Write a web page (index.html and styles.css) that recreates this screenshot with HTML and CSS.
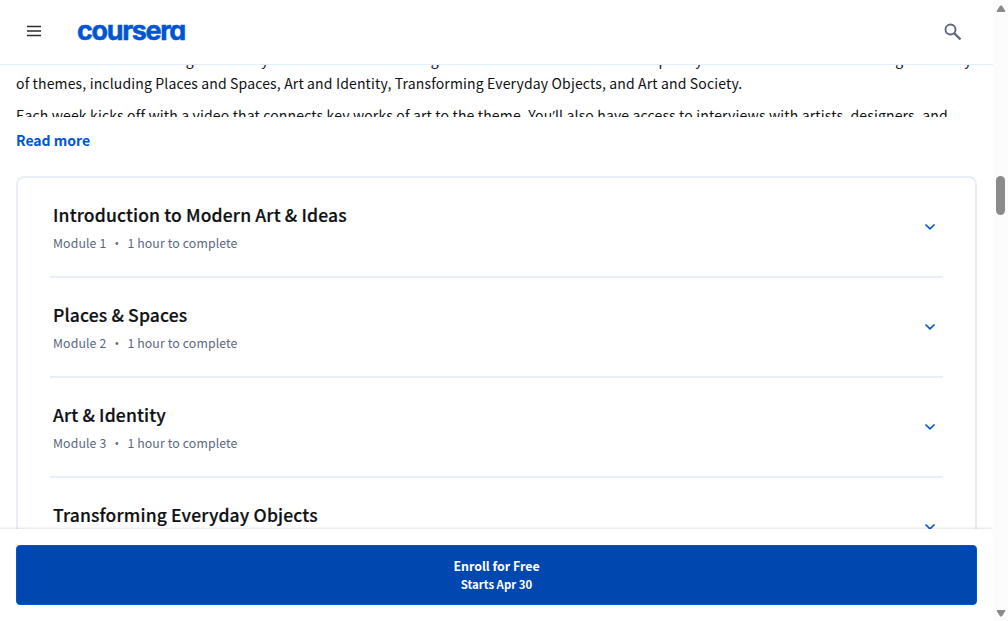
FILE: index.html
```html
<!DOCTYPE html>
<html lang="en">
<head>
<meta charset="utf-8">
<title>Modern Art &amp; Ideas | Coursera</title>
<link rel="stylesheet" href="styles.css">
</head>
<body>
<div class="page">
  <div class="app">
    <header class="header">
      <svg class="menu" width="16" height="12" viewBox="0 0 16 12"><path d="M1 1.5h14M1 6h14M1 10.5h14" stroke="#2b2d31" stroke-width="1.7"/></svg>
      <svg class="logo" width="112" height="36" viewBox="0 0 112 36" role="img"><text class="logo-text" x="0" y="26.300" textLength="108" lengthAdjust="spacingAndGlyphs">coursera</text></svg>
      <svg class="search" width="18" height="18" viewBox="0 0 18 18" fill="none" stroke="#5b6780"><circle cx="6.5" cy="6.5" r="5" stroke-width="1.9"/><path d="M10.2 10.2l6.3 6.2" stroke-width="2.2"/></svg>
    </header>
    <main class="content">
      <div class="about">
        <p class="line line-first">Ideas! This course is designed for anyone interested in learning more about modern and contemporary art. You will look at art through a variety</p>
        <p class="line line-second">of themes, including Places and Spaces, Art and Identity, Transforming Everyday Objects, and Art and Society.</p>
        <p class="line line-third">Each week kicks off with a video that connects key works of art to the theme. You<span class="apostrophe">’</span>ll also have access to interviews with artists, designers, and</p>
      </div>
      <a class="more">Read more</a>
      <section class="modules">
        <article class="module"><div><h3 class="title">Introduction to Modern Art &amp; Ideas</h3><p class="meta"><span>Module 1</span><span class="dot">•</span><span>1 hour to complete</span></p></div><svg class="chevron" width="12" height="8" viewBox="0 0 12 8"><path d="M1.5 1.5L6 5.8l4.500-4.300"/></svg></article>
        <article class="module"><div><h3 class="title">Places &amp; Spaces</h3><p class="meta"><span>Module 2</span><span class="dot">•</span><span>1 hour to complete</span></p></div><svg class="chevron" width="12" height="8" viewBox="0 0 12 8"><path d="M1.5 1.5L6 5.8l4.500-4.300"/></svg></article>
        <article class="module"><div><h3 class="title">Art &amp; Identity</h3><p class="meta"><span>Module 3</span><span class="dot">•</span><span>1 hour to complete</span></p></div><svg class="chevron" width="12" height="8" viewBox="0 0 12 8"><path d="M1.5 1.5L6 5.8l4.500-4.300"/></svg></article>
        <article class="module"><div><h3 class="title">Transforming Everyday Objects</h3></div><svg class="chevron" width="12" height="8" viewBox="0 0 12 8"><path d="M1.5 1.5L6 5.8l4.500-4.300"/></svg></article>
      </section>
    </main>
    <footer class="footer">
      <button class="enroll"><span class="enroll-title">Enroll for Free</span><span class="enroll-date">Starts Apr 30</span></button>
    </footer>
  </div>
  <div class="scrollbar">
    <svg width="10" height="8" viewBox="0 0 10 8"><path d="M4 .8Q5 0 6 .8L9.300 6Q9.500 7 8.500 7h-7Q.5 7 .7 6z" fill="#8b8b8b"/></svg>
    <div class="thumb"></div>
    <svg class="down" width="10" height="8" viewBox="0 0 10 8"><path d="M4 7.200Q5 8 6 7.200L9.300 2Q9.500 1 8.500 1h-7Q.5 1 .7 2z" fill="#8b8b8b"/></svg>
  </div>
</div>
</body>
</html>
```
FILE: styles.css
```css
* { box-sizing: border-box; }
body { margin: 0; background: #fff; color: #0f1114; font-family: "Noto Sans CJK SC", "Noto Sans", sans-serif; overflow: hidden; }
h3, p { margin: 0; }
.page { display: flex; width: 1008px; height: 621px; }
.app { display: flex; flex-direction: column; width: 993px; height: 621px; }
.header { display: flex; align-items: center; flex: none; height: 65px; padding: 1px 31px 1px 26px; border-bottom: 1px solid #e3eefb; }
.menu { margin-bottom: 2px; }
.logo { margin-left: 35px; overflow: visible; }
.logo-text { font-family: Inter, sans-serif; font-size: 26.500px; font-weight: 700; letter-spacing: -1.300px; font-feature-settings: "cv11"; fill: #0056d2; stroke: #0056d2; stroke-width: .5; }
.search { margin-left: auto; }
.content { flex: 1; min-height: 0; overflow: hidden; padding: 0 16px; }
.about { height: 52px; overflow: hidden; }
.line { font-size: 14px; line-height: 24px; white-space: nowrap; letter-spacing: .15px; }
.line-first { margin-top: -18px; padding-left: 6px; letter-spacing: .15px; }
.line-third { margin-top: 8px; letter-spacing: .155px; }
.apostrophe { font-family: "Open Sans", sans-serif; line-height: 1; }
.more { display: block; height: 24px; margin-top: 11px; font-size: 14px; font-weight: 700; line-height: 24px; color: #0056d2; }
.modules { margin-top: 24px; height: 420px; padding: 0 32px; border: 2px solid #e8eef7; border-radius: 8px; }
.module { display: flex; justify-content: space-between; height: 100px; padding: 22px 7px 0 3px; border-bottom: 2px solid #e8eef7; }
.title { font-size: 17.500px; font-weight: 500; line-height: 30px; letter-spacing: .15px; -webkit-text-stroke: .2px; }
.meta { display: flex; margin-top: 3px; font-size: 12.300px; line-height: 20px; letter-spacing: .12px; color: #5b6780; }
.dot { width: 21px; padding-top: 1px; text-align: center; font-family: "Open Sans", sans-serif; }
.chevron { margin-top: 23px; fill: none; stroke: #0056d2; stroke-width: 1.700; }
.footer { flex: none; position: relative; height: 92px; padding: 16px; background: #fff; box-shadow: 0 0 3px rgba(0,0,0,.2); }
.enroll { display: flex; flex-direction: column; align-items: center; justify-content: center; width: 961px; height: 60px; padding: 0; border: 1px solid #0056d2; border-radius: 4px; background: #0048b0; color: #fff; font-family: inherit; font-weight: 700; }
.enroll-title { font-size: 12.400px; line-height: 19px; }
.enroll-date { margin-top: -1px; font-size: 11.400px; line-height: 18px; }
.scrollbar { position: relative; display: flex; flex-direction: column; align-items: center; width: 15px; padding: 5px 0 4px; background: #fcfcfc; }
.thumb { width: 9px; height: 39px; margin-top: 163px; border-radius: 5px; background: #8b8b8b; }
.down { margin-top: auto; }
```
